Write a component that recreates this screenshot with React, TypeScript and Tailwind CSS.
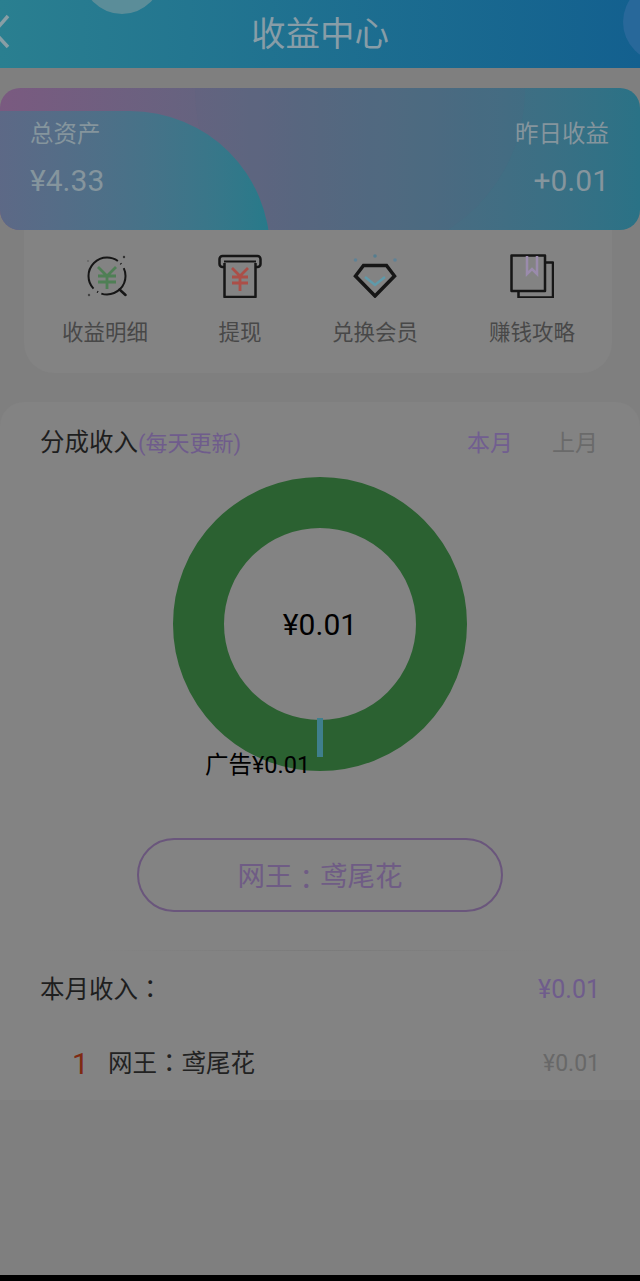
function DetailIcon() {
  return (
    <svg width="44" height="44" viewBox="-4 0 44 44" fill="none">
      <circle cx="20" cy="22" r="18.500" stroke="#161616" strokeWidth="2" pathLength="100" strokeDasharray="30 3 1 4 47 3 1 4 7" />
      <path d="M32.500 35.500L38.500 41" stroke="#161616" strokeWidth="2.500" strokeLinecap="round" />
      <circle cx="37" cy="3" r="1.200" fill="#333333" />
      <circle cx="2" cy="41" r="1.200" fill="#444444" />
      <circle cx="1" cy="7" r="1" fill="#666666" />
      <path d="M11 13l9 9 9-9M11 22h18M11 28h18M20 22v13" stroke="#4f7f55" strokeWidth="2.800" />
    </svg>
  )
}

function WithdrawIcon() {
  return (
    <svg width="44" height="44" viewBox="0 0 44 44" fill="none">
      <rect x="1.500" y="2" width="41" height="11" rx="3" stroke="#161616" strokeWidth="2.500" />
      <path d="M6 7.500H38" stroke="#161616" strokeWidth="2" />
      <path d="M6.500 9V43H37.500V9" fill="#838383" stroke="#161616" strokeWidth="2.500" strokeLinejoin="round" />
      <path d="M14 14l8 8 8-8M14 23h16M14 29h16M22 22v15" stroke="#ab4f48" strokeWidth="2.800" />
    </svg>
  )
}

function DiamondIcon() {
  return (
    <svg width="44" height="44" viewBox="0 0 44 44" fill="none">
      <circle cx="2.500" cy="6" r="1.800" fill="#5f8296" />
      <circle cx="22" cy="2" r="1.800" fill="#557d8f" />
      <circle cx="42" cy="6" r="1.800" fill="#5f8296" />
      <path d="M10.500 11.500H33.500L41.500 22L22 42L2.500 22Z" stroke="#161616" strokeWidth="3.500" />
      <path d="M12 23L22 31L32 23" stroke="#5f9aaa" strokeWidth="2.500" />
    </svg>
  )
}

function GuideIcon() {
  return (
    <svg width="44" height="44" viewBox="0 0 44 44" fill="none">
      <path d="M1.500 1.500H35V37H1.500Z" stroke="#161616" strokeWidth="2.500" strokeLinejoin="round" />
      <path d="M35 8.500H43V43.500H8.500V37" stroke="#161616" strokeWidth="2.500" strokeLinejoin="round" />
      <path d="M17 2V20L22 15L27 20V2" stroke="#9a8bac" strokeWidth="2.500" />
    </svg>
  )
}

function MenuItem({ label, icon, className }: { label: string; icon: React.ReactNode; className: string }) {
  return (
    <div className={`flex shrink-0 flex-col items-center ${className}`}>
      <div className="h-[44px] w-[44px]">{icon}</div>
      <span className="mt-[19px] whitespace-nowrap text-[21.500px] leading-[32px] text-[#484848]">{label}</span>
    </div>
  )
}

function Donut() {
  return (
    <svg width="294" height="294" viewBox="0 0 294 294" className="block">
      <circle cx="147" cy="147" r="121.500" fill="none" stroke="#2b6131" strokeWidth="51" />
      <rect x="144" y="241" width="6" height="39" fill="#3f7f8d" />
    </svg>
  )
}

// the colon in the reference sits centred in its cell, as the TC font draws it
function Colon() {
  return <span className="font-['Noto_Sans_CJK_TC'] leading-[0]">：</span>
}

export default function App() {
  return (
    <div
      className="relative h-[1281px] w-[640px] overflow-hidden bg-[#7f7f7f]"
      style={{ fontFamily: 'Roboto, "Noto Sans CJK SC", sans-serif' }}
    >
      <header className="relative flex h-[68px] items-center justify-center overflow-hidden bg-gradient-to-r from-[#2a7f90] to-[#13608f]">
        <div className="absolute left-[82px] top-[-66px] h-[80px] w-[80px] rounded-full bg-[#5b8d99]" />
        <div className="absolute left-[623px] top-[-18px] h-[80px] w-[80px] rounded-full bg-[#28689a]" />
        <svg width="12" height="36" viewBox="0 0 12 36" fill="none" className="absolute left-0 top-[14px]">
          <path d="M8 2L-6 18L8 33" stroke="#889ea5" strokeWidth="3.500" />
        </svg>
        <h1 className="text-[34.500px] font-normal leading-[40px] text-[#889da7]">收益中心</h1>
      </header>

      <section className="relative mt-[20px] h-[142px] overflow-hidden rounded-[20px] bg-gradient-to-r from-[#7a5a80] via-[#56687f] to-[#2a7286] text-[#85959d]">
        <div className="absolute left-[195px] top-[-163px] h-[330px] w-[330px] rounded-full bg-[#5a6282]/15" />
        <div className="absolute left-[-150px] top-[23px] h-[280px] w-[420px] rounded-full bg-gradient-to-r from-[#6e5e84] to-[#277a8a]" />
        <div className="relative flex justify-between pl-[30px] pr-[31px] pt-[31px]">
          <div>
            <p className="text-[23.500px] leading-[30px]">总资产</p>
            <p className="mt-[16px] text-[30px] leading-[32px]">¥4.33</p>
          </div>
          <div className="text-right">
            <p className="text-[23.500px] leading-[30px]">昨日收益</p>
            <p className="mt-[16px] text-[30px] leading-[32px]">+0.01</p>
          </div>
        </div>
      </section>

      <section className="relative ml-[24px] h-[143px] w-[588px] rounded-b-[30px] bg-[#838383] pt-[24px]">
        <div className="flex pl-[13px]">
          <MenuItem label="收益明细" icon={<DetailIcon />} className="w-[136px]" />
          <MenuItem label="提现" icon={<WithdrawIcon />} className="w-[134px]" />
          <MenuItem label="兑换会员" icon={<DiamondIcon />} className="w-[136px]" />
          <MenuItem label="赚钱攻略" icon={<GuideIcon />} className="w-[178px]" />
        </div>
      </section>

      <section className="relative mt-[29px] h-[698px] rounded-t-[24px] bg-[#838383]">
        <div className="flex items-center justify-between pl-[40px] pr-[42px] pt-[25px]">
          <p className="text-[24.500px] leading-[32px] text-[#1e1e1e]">
            分成收入<span className="text-[22px] text-[#6f5c8c]">(每天更新)</span>
          </p>
          <div className="flex gap-[39px] text-[23px] leading-[32px]">
            <span className="text-[#715e90]">本月</span>
            <span className="text-[#6a6a6a]">上月</span>
          </div>
        </div>

        <div className="relative mx-auto mt-[17px] h-[294px] w-[294px]">
          <Donut />
          <div className="absolute inset-0 flex items-center justify-center pt-[2px] text-[30px] leading-[36px] text-black">¥0.01</div>
          <div className="absolute left-[32px] top-[273px] whitespace-nowrap text-[23.500px] leading-[30px] text-black">广告¥0.01</div>
        </div>

        <div className="mx-auto mt-[67px] flex h-[74px] w-[366px] items-center justify-center rounded-full border-2 border-[#6a567c] pt-[3px] text-[27.500px] text-[#6f5c85]">
          网王<Colon />鸢尾花
        </div>

        <div className="mx-auto mt-[38px] h-px w-[440px] bg-gradient-to-r from-[#838383] via-[#7b7b7b] to-[#838383]" />

        <div className="flex items-center justify-between pl-[40px] pr-[40px] pt-[22px]">
          <span className="text-[24.500px] leading-[34px] text-[#1e1e1e]">本月收入<Colon /></span>
          <span className="text-[25px] leading-[34px] text-[#6f5c8c]">¥0.01</span>
        </div>

        <div className="flex items-center justify-between pl-[72px] pr-[40px] pt-[40px]">
          <div className="flex items-center">
            <span className="w-[36px] text-[30px] leading-[34px] text-[#7f2a12]">1</span>
            <span className="text-[24.500px] leading-[34px] text-[#222222]">网王<Colon />鸢尾花</span>
          </div>
          <span className="text-[23px] leading-[34px] text-[#686868]">¥0.01</span>
        </div>
      </section>

      <div className="absolute bottom-0 left-0 h-[6px] w-full bg-black" />
    </div>
  )
}
